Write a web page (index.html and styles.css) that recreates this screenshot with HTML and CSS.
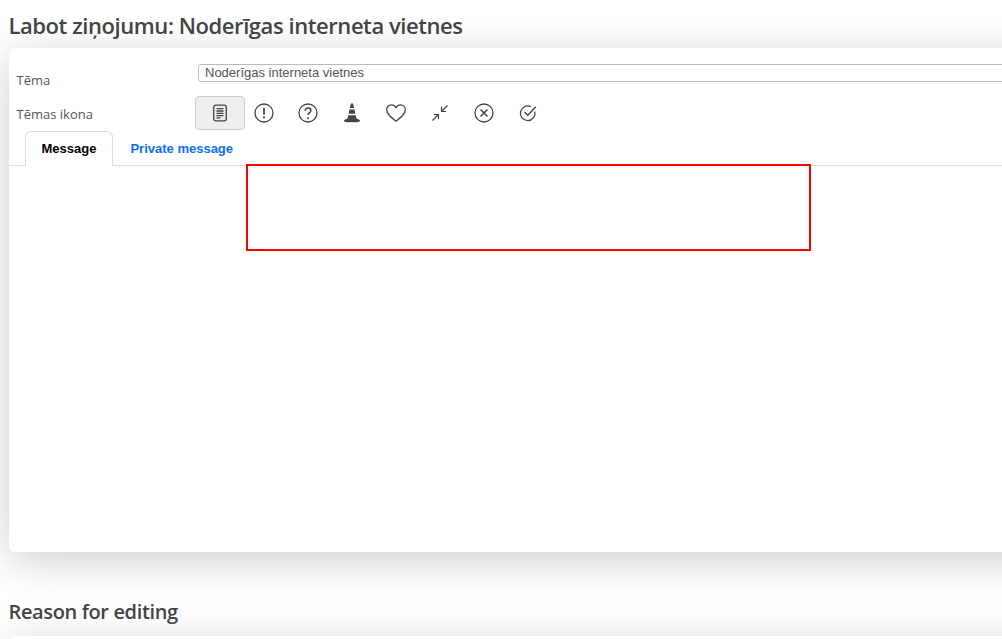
FILE: index.html
```html
<!DOCTYPE html>
<html lang="lv">
<head>
<meta charset="utf-8">
<title>Labot ziņojumu</title>
<link rel="stylesheet" href="styles.css">
</head>
<body>
<main class="page">
  <h1 class="title">Labot ziņojumu: Noderīgas interneta vietnes</h1>
  <section class="card">
    <div class="row row-topic">
      <label class="label">Tēma</label>
      <input class="topic-input" type="text" value="Noderīgas interneta vietnes">
    </div>
    <div class="row row-icons">
      <span class="label">Tēmas ikona</span>
      <div class="icons">
        <button class="icon-btn active" type="button"><svg width="18" height="18" viewBox="0 0 18 18" fill="none" stroke="#444" stroke-width="1.3"><rect x="2.7" y="1.2" width="12.6" height="15.6" rx="2"/><path d="M5.5 4.7h7M5.5 7h7M5.5 9.3h7M5.5 11.6h7M5.5 13.9h4"/></svg></button>
        <button class="icon-btn" type="button"><svg width="20" height="20" viewBox="0 0 20 20" fill="none" stroke="#444" stroke-width="1.3"><circle cx="10" cy="10" r="9"/><path d="M10 5v6.5" stroke-width="1.8"/><circle cx="10" cy="14.3" r="1.1" fill="#444" stroke="none"/></svg></button>
        <button class="icon-btn" type="button"><svg width="20" height="20" viewBox="0 0 20 20" fill="none" stroke="#444" stroke-width="1.3"><circle cx="10" cy="10" r="9"/><path d="M7.2 7.8c0-1.7 1.3-2.8 2.9-2.8 1.6 0 2.8 1 2.8 2.5 0 2.3-2.9 2.3-2.9 4.6" stroke-width="1.5"/><circle cx="10" cy="14.9" r="1" fill="#444" stroke="none"/></svg></button>
        <button class="icon-btn" type="button"><svg width="20" height="20" viewBox="0 0 20 20" fill="#444"><path d="M8.900.4h2.200l1 4.600H7.900z"/><path d="M7.500 6.600h5l.9 4.200H6.600z"/><path d="M6.300 12.300h7.400l.9 3.400c1.500.2 3.400 1 3.400 1.900 0 1-1.500 1.600-3 1.600H5c-1.500 0-3-.6-3-1.600 0-.9 1.900-1.700 3.400-1.900z"/></svg></button>
        <button class="icon-btn" type="button"><svg width="20" height="18" viewBox="0 0 20 18" fill="none" stroke="#444" stroke-width="1.3" stroke-linejoin="round"><path d="M10 17.200C4.500 12.800.7 9.800.7 5.600.7 2.900 2.800.8 5.400.8c1.900 0 3.600 1 4.600 2.800C11 1.800 12.700.8 14.600.8c2.600 0 4.700 2.100 4.700 4.800 0 4.200-3.800 7.200-9.300 11.600z"/></svg></button>
        <button class="icon-btn" type="button"><svg width="18" height="18" viewBox="0 0 18 18" fill="none" stroke="#444" stroke-width="1.2"><path d="M10.500 7.500L16.500 1.500M10.500 2.800v4.700h4.700M7.500 10.500L1.500 16.500M2.800 10.500h4.700v4.700"/></svg></button>
        <button class="icon-btn" type="button"><svg width="20" height="20" viewBox="0 0 20 20" fill="none" stroke="#444" stroke-width="1.3"><circle cx="10" cy="10" r="9"/><path d="M6.500 6.500l7 7M13.500 6.500l-7 7" stroke-width="1.5"/></svg></button>
        <button class="icon-btn" type="button"><svg width="18" height="18" viewBox="0 0 18 18" fill="none" stroke="#444" stroke-width="1.3"><path d="M15.800 7.600A7.300 7.300 0 1 1 11.700 2.600"/><path d="M5.500 8l3.300 3.300L16.800 2.800" stroke-width="1.400"/></svg></button>
      </div>
    </div>
    <div class="tabs">
      <button class="tab tab-active" type="button">Message</button>
      <button class="tab tab-private" type="button">Private message</button>
    </div>
    <div class="editor"></div>
  </section>
  <h2 class="subtitle">Reason for editing</h2>
  <section class="card-next"></section>
  <div class="redaction"></div>
</main>
</body>
</html>
```

FILE: styles.css
```css
* { box-sizing: border-box; }
html, body {
  margin: 0;
  height: 100%;
  overflow: hidden;
}
body {
  background: #fff;
  color: #444;
  font-family: "Open Sans", "Noto Sans", sans-serif;
}
.page {
  position: relative;
  height: 639px;
  padding: 12px 0 0 9px;
  overflow: hidden;
}
.title {
  margin: 0 0 9px -0.5px;
  font-size: 22px;
  line-height: 27px;
  font-weight: 600;
  color: #444;
  letter-spacing: -0.43px;
}
.card {
  width: 1100px;
  height: 504px;
  background: #fff;
  border-radius: 6px;
  box-shadow: 0 8px 40px rgba(0, 0, 0, 0.2);
  padding-top: 16px;
}
.row {
  display: flex;
  align-items: flex-start;
}
.label {
  width: 189px;
  padding-left: 7.500px;
  flex: none;
  font-size: 13px;
  line-height: 18px;
  color: #555;
}
.row-topic { height: 32px; }
.row-topic .label { padding-top: 7px; }
.topic-input {
  width: 900px;
  height: 18px;
  border: 1px solid #bbb;
  border-radius: 3px;
  padding: 0 6px 2px;
  font: 13px/14px "Liberation Sans", Arial, sans-serif;
  color: #555;
  background: #fff;
  outline: none;
}
.row-icons { height: 35px; }
.row-icons .label { padding-top: 9px; width: 186px; }
.icons { display: flex; align-items: center; height: 34px; }
.icon-btn {
  width: 44px;
  height: 34px;
  padding: 0;
  border: 1px solid transparent;
  border-radius: 4px;
  background: none;
  display: flex;
  align-items: center;
  justify-content: center;
}
.icon-btn.active {
  width: 50px;
  margin-right: -3px;
  background: #eee;
  border-color: #ccc;
}
.tabs {
  display: flex;
  height: 35px;
  padding-left: 16px;
  border-bottom: 1px solid #ddd;
}
.tab {
  height: 35px;
  border: 1px solid transparent;
  border-bottom: 0;
  border-radius: 6px 6px 0 0;
  background: none;
  font: bold 13px/16px "Liberation Sans", Arial, sans-serif;
  color: #0d6efd;
}
.tab-active {
  padding: 0 15.500px;
  background: #fff;
  border-color: #ddd;
  color: #000;
}
.tab-private { padding: 0 16.500px; }
.editor { height: 300px; }
.subtitle {
  margin: 46px 0 0 -0.5px;
  font-size: 20px;
  line-height: 27px;
  font-weight: 600;
  color: #444;
  letter-spacing: -0.37px;
}
.card-next {
  width: 1100px;
  height: 100px;
  margin-top: 11px;
  background: #fff;
  border-radius: 6px;
  box-shadow: 0 8px 40px rgba(0, 0, 0, 0.2);
}
.redaction {
  position: absolute;
  left: 246px;
  top: 164px;
  width: 565px;
  height: 87px;
  border: 2px solid #f00;
}
```
